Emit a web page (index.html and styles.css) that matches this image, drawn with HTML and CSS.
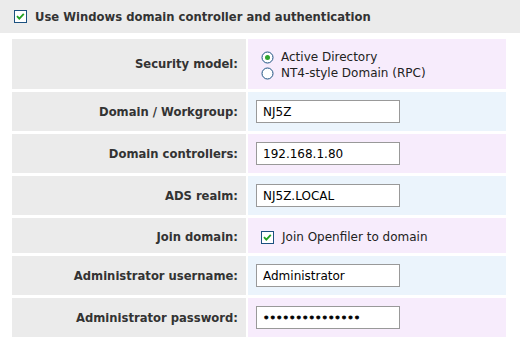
FILE: index.html
```html
<!DOCTYPE html>
<html lang="en">
  <head>
    <meta charset="UTF-8" />
    <title>Windows domain controller</title>
    <link rel="stylesheet" href="styles.css">
  </head>
  <body>
    <div id="header">
      <span class="check">
        <svg viewBox="0 0 13 13"><rect x="0.5" y="0.5" width="12" height="12" fill="#fff" stroke="#1c5180"/><path d="M3 6.2l2.3 2.4 4.5-4.8" fill="none" stroke="#21a121" stroke-width="1.8"/></svg>
      </span>
      Use Windows domain controller and authentication
    </div>
    <table id="settings">
      <tr class="pink">
        <td class="label">Security model:</td>
        <td class="value radios">
          <div class="option">
            <svg class="radio" viewBox="0 0 13 13"><circle cx="6.5" cy="6.5" r="5.5" fill="#fff" stroke="#1c5180"/><circle cx="6.5" cy="6.5" r="2.5" fill="#2fa52f"/></svg>
            Active Directory
          </div>
          <div class="option">
            <svg class="radio" viewBox="0 0 13 13"><circle cx="6.5" cy="6.5" r="5.5" fill="#fff" stroke="#1c5180"/></svg>
            NT4-style Domain (RPC)
          </div>
        </td>
      </tr>
      <tr class="blue">
        <td class="label">Domain / Workgroup:</td>
        <td class="value"><input type="text" value="NJ5Z"></td>
      </tr>
      <tr class="pink">
        <td class="label">Domain controllers:</td>
        <td class="value"><input type="text" value="192.168.1.80"></td>
      </tr>
      <tr class="blue">
        <td class="label">ADS realm:</td>
        <td class="value"><input type="text" value="NJ5Z.LOCAL"></td>
      </tr>
      <tr class="pink">
        <td class="label short">Join domain:</td>
        <td class="value short">
          <div class="option">
            <span class="check">
              <svg viewBox="0 0 13 13"><rect x="0.5" y="0.5" width="12" height="12" fill="#fff" stroke="#1c5180"/><path d="M3 6.2l2.3 2.4 4.5-4.8" fill="none" stroke="#21a121" stroke-width="1.8"/></svg>
            </span>
            Join Openfiler to domain
          </div>
        </td>
      </tr>
      <tr class="blue">
        <td class="label">Administrator username:</td>
        <td class="value"><input type="text" value="Administrator"></td>
      </tr>
      <tr class="pink">
        <td class="label">Administrator password:</td>
        <td class="value"><input type="password" value="123456789012345"></td>
      </tr>
    </table>
  </body>
</html>
```

FILE: styles.css
```css
body {
  margin: 0;
  background: #fff;
  font-family: "DejaVu Sans", Verdana, sans-serif;
  color: #333;
}

#header {
  height: 33px;
  background: #ebebeb;
  display: flex;
  align-items: center;
  padding-left: 14px;
  font-size: 11.6px;
  font-weight: bold;
  color: #333;
}

.check {
  display: inline-flex;
  width: 13px;
  height: 13px;
  margin-right: 8px;
}

.check svg {
  width: 13px;
  height: 13px;
}

#settings {
  margin: 3px 0 0 10px;
  width: 498px;
  border-collapse: separate;
  border-spacing: 2px 3px;
  font-size: 11.6px;
}

#settings td {
  padding: 8px 8px;
}

.label {
  width: 218px;
  background: #ebebeb;
  text-align: right;
  font-weight: bold;
  color: #333;
}

.value {
  color: #222;
  font-size: 12px;
}

.pink .value {
  background: #f7ecfc;
}

.blue .value {
  background: #ebf4fc;
}

#settings .radios {
  padding: 10px 8px 8px 13px;
}

#settings .short {
  padding-top: 11px;
  padding-bottom: 8px;
}

#settings .value.short {
  padding-left: 13px;
}

.option {
  display: flex;
  align-items: center;
  height: 16px;
}

.radio {
  width: 13px;
  height: 13px;
  margin-right: 7px;
}

input {
  box-sizing: border-box;
  width: 144px;
  height: 23px;
  margin: 0;
  padding: 2px 6px;
  border: 1px solid #999;
  background: #fff;
  font-family: "DejaVu Sans", Verdana, sans-serif;
  font-size: 12px;
  color: #000;
}

input[type="password"] {
  font-size: 11px;
  -webkit-text-stroke: 0.8px #000;
}
```
